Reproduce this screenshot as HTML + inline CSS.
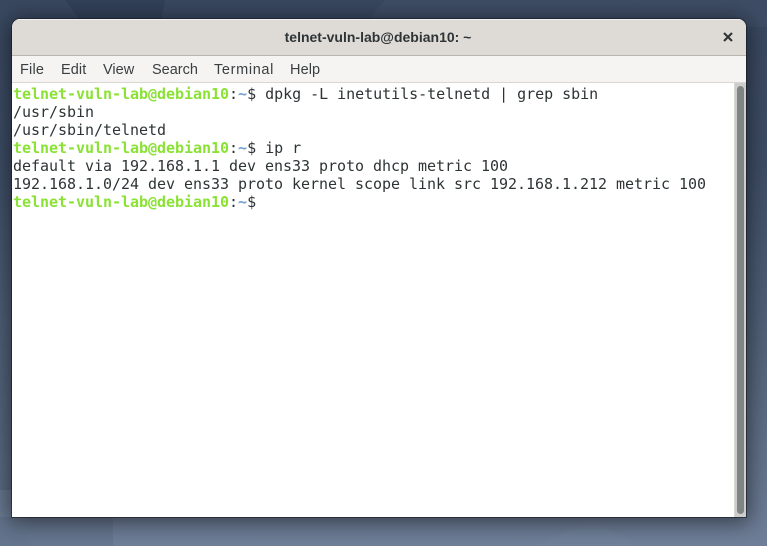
<!DOCTYPE html>
<html>
<head>
<meta charset="utf-8">
<style>
html,body{margin:0;padding:0;width:767px;height:546px;overflow:hidden}
body{position:relative;background:linear-gradient(180deg,#394860 0%,#3e4d66 30%,#58687f 70%,#6f7f99 100%);font-family:"Liberation Sans",sans-serif}
.shape{position:absolute;left:0;top:0}
.win{position:absolute;left:12px;top:19px;width:734px;height:498px;border-radius:8px 8px 0 0;box-shadow:0 3px 22px 3px rgba(0,0,0,.5),0 0 0 1px rgba(30,35,45,.6);overflow:hidden;background:#fff}
.title{position:absolute;left:0;top:0;width:734px;height:37px;background:#dedbd7;border-top:1px solid #f3f1ef;box-sizing:border-box;border-bottom:1px solid #b9b5ae}
.title span{position:absolute;left:-1px;width:734px;top:8px;text-align:center;font-weight:bold;font-size:14px;line-height:18px;color:#2e3436}
.close{position:absolute;left:710px;top:11px}
.menu{position:absolute;left:0;top:37px;width:734px;height:27px;background:#f5f4f2;border-bottom:1px solid #dad7d3;box-sizing:border-box}
.menu span{position:absolute;top:5px;font-size:14.5px;line-height:18px;color:#3a3f41}
.term{position:absolute;left:1px;top:66px;margin:0;font-family:"DejaVu Sans Mono",monospace;font-size:15px;letter-spacing:-.03px;line-height:18px;color:#2e3436;white-space:pre}
.g{color:#8ae234;font-weight:bold}
.b{color:#729fcf;font-weight:bold}
.sb{position:absolute;left:722px;top:64px;width:12px;height:434px;background:#cfcdcb;border-left:1px solid #dad7d3;box-sizing:border-box}
.th{position:absolute;left:2px;top:3px;width:7px;height:428px;border-radius:4px;background:#7f8584}
</style>
</head>
<body>
<svg class="shape" width="767" height="546" viewBox="0 0 767 546">
<polygon points="65,0 165,0 160,27 85,27" fill="#2b3a52" opacity=".45"/>
<polygon points="385,0 767,0 767,27 362,27" fill="#45546e" opacity=".4"/>
<polygon points="0,300 12,304 12,490 0,490" fill="#4f5f78" opacity=".5"/>
<polygon points="0,517 12,517 35,546 0,546" fill="#5f7089" opacity=".7"/>
<polygon points="12,517 113,517 113,546 35,546" fill="#617189" opacity=".6"/>
<polygon points="590,520 640,546 535,546" fill="#75849b" opacity=".3"/>
</svg>
<div class="win">
  <div class="title"><span>telnet-vuln-lab@debian10: ~</span>
    <svg class="close" width="12" height="12" viewBox="0 0 12 12"><path d="M2 2L10 10M10 2L2 10" stroke="#2e3436" stroke-width="2.1" fill="none"/></svg>
  </div>
  <div class="menu">
    <span style="left:8px;letter-spacing:.2px">File</span>
    <span style="left:49px;letter-spacing:.1px">Edit</span>
    <span style="left:91px">View</span>
    <span style="left:140px">Search</span>
    <span style="left:202px;letter-spacing:.65px">Terminal</span>
    <span style="left:278px;letter-spacing:.1px">Help</span>
  </div>
<pre class="term"><span class="g">telnet-vuln-lab@debian10</span>:<span class="b">~</span>$ dpkg -L inetutils-telnetd | grep sbin
/usr/sbin
/usr/sbin/telnetd
<span class="g">telnet-vuln-lab@debian10</span>:<span class="b">~</span>$ ip r
default via 192.168.1.1 dev ens33 proto dhcp metric 100
192.168.1.0/24 dev ens33 proto kernel scope link src 192.168.1.212 metric 100
<span class="g">telnet-vuln-lab@debian10</span>:<span class="b">~</span>$</pre>
  <div class="sb"><div class="th"></div></div>
</div>
</body>
</html>
